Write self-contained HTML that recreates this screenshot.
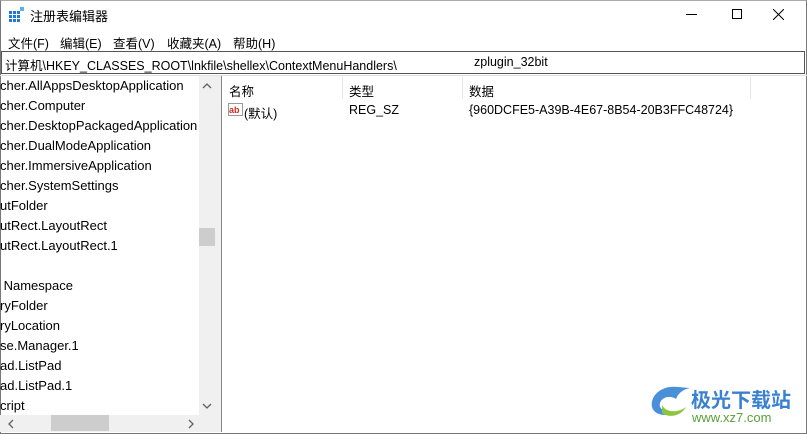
<!DOCTYPE html>
<html><head><meta charset="utf-8"><style>
*{margin:0;padding:0;box-sizing:border-box}
body{width:807px;height:434px;background:#fff;font-family:"Liberation Sans","Noto Sans CJK SC",sans-serif;font-size:12.5px;color:#000;position:relative;overflow:hidden}
.abs{position:absolute;white-space:nowrap}
.win{position:absolute;left:0;top:0;width:807px;height:434px;border:1px solid #777;border-top:1px solid #aaa}
</style></head><body>
<div class="win"></div>
<svg class="abs" style="left:9px;top:7px" width="16" height="16"><g fill="#1e7ad6"><rect x="0" y="4" width="3" height="3"/><rect x="4" y="4" width="3" height="3"/><rect x="8" y="4" width="3" height="3"/><rect x="0" y="8" width="3" height="3"/><rect x="4" y="8" width="3" height="3"/><rect x="8" y="8" width="3" height="3"/><rect x="0" y="12" width="3" height="3"/><rect x="4" y="12" width="3" height="3"/><rect x="8" y="12" width="3" height="3"/></g><rect x="11" y="0" width="4" height="4" fill="#5ab0ef"/></svg>
<div class="abs" style="left:30px;top:6px;font-size:13px">注册表编辑器</div>
<div class="abs" style="left:686px;top:14px;width:11px;height:1px;background:#000"></div>
<div class="abs" style="left:732px;top:9px;width:10px;height:10px;border:1px solid #000"></div>
<svg class="abs" style="left:773px;top:9px" width="11" height="11"><path d="M0 0L11 11M11 0L0 11" stroke="#000" stroke-width="1"/></svg>
<div class="abs" style="left:8px;top:33px">文件(F)</div>
<div class="abs" style="left:60px;top:33px">编辑(E)</div>
<div class="abs" style="left:113px;top:33px">查看(V)</div>
<div class="abs" style="left:167px;top:33px">收藏夹(A)</div>
<div class="abs" style="left:233px;top:33px">帮助(H)</div>
<div class="abs" style="left:1px;top:51px;width:804px;height:23px;border:1px solid #555;background:#fff"></div>
<div class="abs" style="left:5px;top:55px">计算机\HKEY_CLASSES_ROOT\lnkfile\shellex\ContextMenuHandlers\</div>
<div class="abs" style="left:474px;top:55px">zplugin_32bit</div>
<div class="abs" style="left:0;top:75px;width:807px;height:1px;background:#e0e0e0"></div>
<div class="abs" style="left:0;top:76px;width:216px;height:356px;border-right:1px solid #888"></div>
<div class="abs" style="left:216px;top:76px;width:6px;height:356px;background:#f0f0f0;border-right:1px solid #888"></div>
<div class="abs" style="left:0;top:76px;width:199px;height:340px;overflow:hidden;font-size:13px;line-height:20px">
<div style="margin-top:0px;margin-left:0px">cher.AllAppsDesktopApplication<br>cher.Computer<br>cher.DesktopPackagedApplication<br>cher.DualModeApplication<br>cher.ImmersiveApplication<br>cher.SystemSettings<br>utFolder<br>utRect.LayoutRect<br>utRect.LayoutRect.1<br>&nbsp;<br>&nbsp;Namespace<br>ryFolder<br>ryLocation<br>se.Manager.1<br>ad.ListPad<br>ad.ListPad.1<br>cript</div></div>
<div class="abs" style="left:199px;top:76px;width:17px;height:340px;background:#f0f0f0"></div>
<div class="abs" style="left:199px;top:228px;width:16px;height:18px;background:#cdcdcd"></div>
<svg class="abs" style="left:202px;top:83px" width="10" height="6"><path d="M1 5L5 1L9 5" stroke="#606060" fill="none" stroke-width="1.3"/></svg>
<svg class="abs" style="left:202px;top:403px" width="10" height="6"><path d="M1 1L5 5L9 1" stroke="#606060" fill="none" stroke-width="1.3"/></svg>
<div class="abs" style="left:0;top:415px;width:216px;height:17px;background:#f0f0f0"></div>
<div class="abs" style="left:51px;top:415px;width:58px;height:16px;background:#cdcdcd"></div>
<svg class="abs" style="left:8px;top:419px" width="6" height="10"><path d="M5 1L1 5L5 9" stroke="#606060" fill="none" stroke-width="1.3"/></svg>
<svg class="abs" style="left:188px;top:419px" width="6" height="10"><path d="M1 1L5 5L1 9" stroke="#606060" fill="none" stroke-width="1.3"/></svg>
<div class="abs" style="left:342px;top:77px;width:1px;height:22px;background:#e5e5e5"></div>
<div class="abs" style="left:462px;top:77px;width:1px;height:22px;background:#e5e5e5"></div>
<div class="abs" style="left:750px;top:77px;width:1px;height:22px;background:#e5e5e5"></div>
<div class="abs" style="left:229px;top:81px">名称</div>
<div class="abs" style="left:349px;top:81px">类型</div>
<div class="abs" style="left:469px;top:81px">数据</div>
<svg class="abs" style="left:228px;top:102px" width="16" height="16"><rect x="0.5" y="1.5" width="14" height="12" fill="#fff" stroke="#999"/><text x="1" y="11" font-size="9" font-weight="bold" fill="#c8321e" font-family="Liberation Sans">ab</text></svg>
<div class="abs" style="left:244px;top:103px">(默认)</div>
<div class="abs" style="left:349px;top:103px">REG_SZ</div>
<div class="abs" style="left:469px;top:103px">{960DCFE5-A39B-4E67-8B54-20B3FFC48724}</div>
<svg class="abs" style="left:648px;top:383px" width="44" height="36"><path d="M30 4C14 2 2 12 4 24C6 32 18 34 26 30C18 30 10 26 12 20C14 14 22 12 28 16C30 10 36 6 42 5Z" fill="#4a90d9"/><path d="M14 22C18 30 30 30 38 24C34 32 22 36 14 30Z" fill="#8cc63f"/></svg>
<div class="abs" style="left:691px;top:384px;font-size:20px;font-weight:bold;color:#3a82d0">极光下载站</div>
<div class="abs" style="left:692px;top:410px;font-size:13px;color:#5aa03c">www.xz7.com</div>
</body></html>
